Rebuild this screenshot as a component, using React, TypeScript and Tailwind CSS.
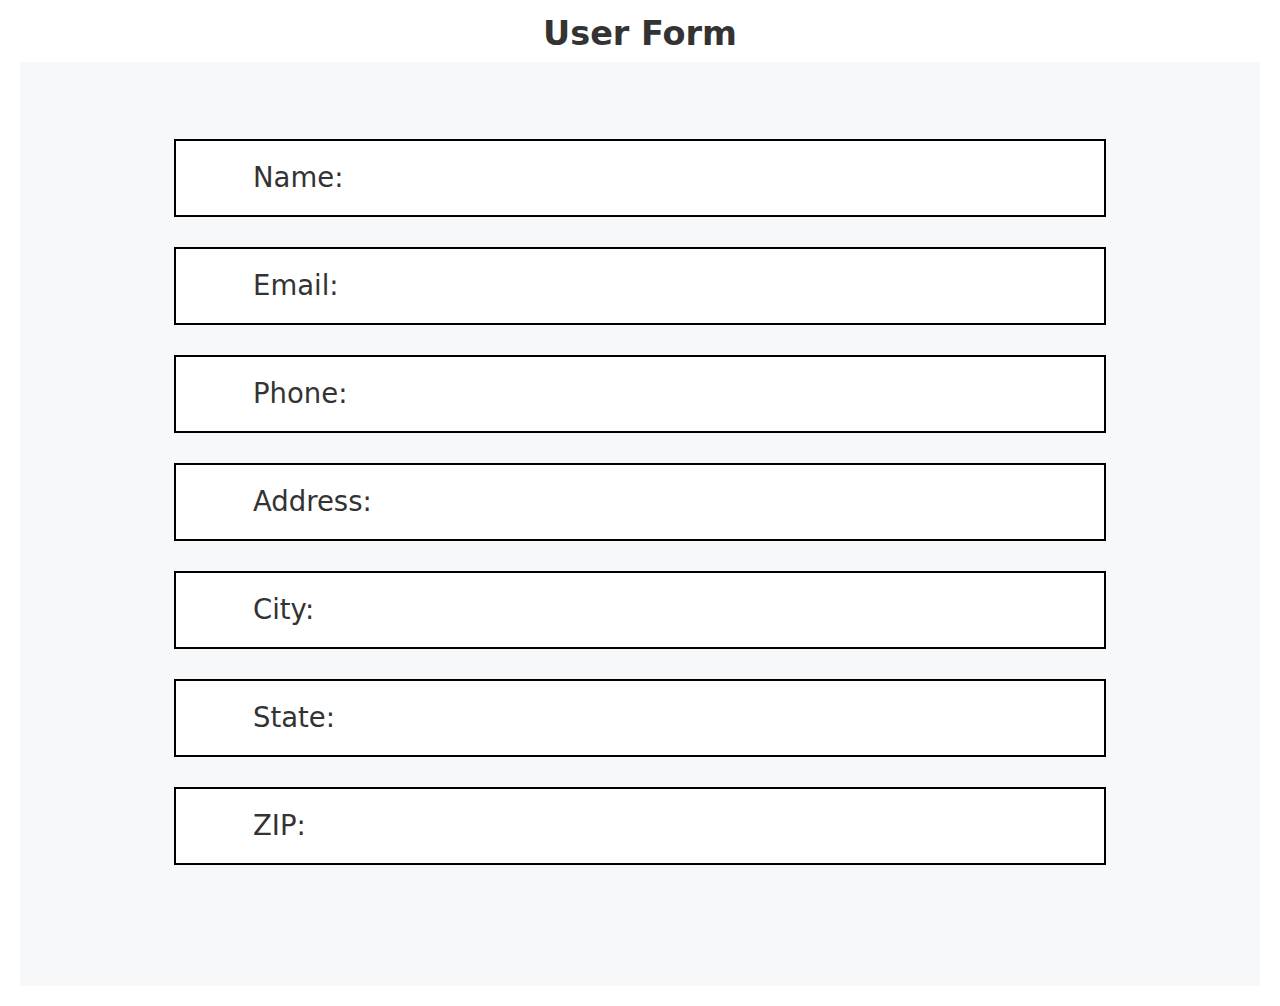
const fields = ["Name:", "Email:", "Phone:", "Address:", "City:", "State:", "ZIP:"];

export default function App() {
  return (
    <div className="w-[1280px] h-[1006px] bg-white px-5 pb-5 flex flex-col" style={{ fontFamily: '"DejaVu Sans", sans-serif' }}>
      <h1 className="h-[62px] flex items-center justify-center text-[33.5px] font-bold text-[#333333] pt-[6px]">User Form</h1>
      <div className="flex-1 bg-[#f7f8fa] flex flex-col items-center pt-[77px] gap-[30px]">
        {fields.map((f) => (
          <div key={f} className="w-[932px] h-[78px] border-2 border-black bg-white flex items-center pl-[77px] shrink-0">
            <span className="text-[27.5px] text-[#333333]">{f}</span>
          </div>
        ))}
      </div>
    </div>
  );
}
